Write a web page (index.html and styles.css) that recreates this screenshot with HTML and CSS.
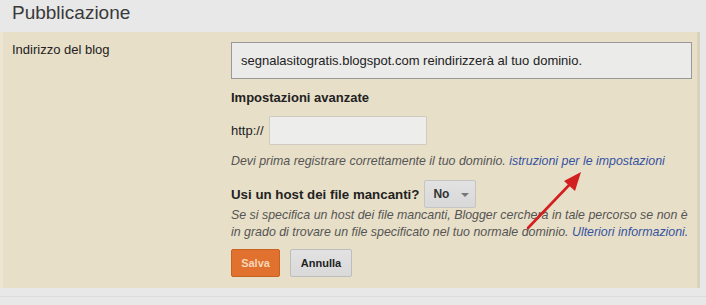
FILE: index.html
```html
<!DOCTYPE html>
<html lang="it">
<head>
    <meta charset="UTF-8">
    <meta name="viewport" content="width=device-width, initial-scale=1.0">
    <title>Pubblicazione</title>
    <link rel="stylesheet" href="styles.css">
</head>
<body>

    <h1 class="page-title">Pubblicazione</h1>

    <div class="panel">
        <div class="label">Indirizzo del blog</div>

        <div class="settings">
            <div class="address-box">segnalasitogratis.blogspot.com reindirizzerà al tuo dominio.</div>

            <h3 class="section-title">Impostazioni avanzate</h3>

            <div class="http-row">
                <span>http://</span>
                <input type="text" class="domain-input">
            </div>

            <p class="note">Devi prima registrare correttamente il tuo dominio. <a href="#">istruzioni per le impostazioni</a></p>

            <div class="host-row">
                <span class="host-label">Usi un host dei file mancanti?</span>
                <button class="select-btn">No <span class="caret"></span></button>
            </div>

            <p class="note multi">Se si specifica un host dei file mancanti, Blogger cercherà in tale percorso se non è in grado di trovare un file specificato nel tuo normale dominio. <a href="#" class="nowrap">Ulteriori informazioni.</a></p>

            <div class="actions">
                <button class="btn btn-save">Salva</button>
                <button class="btn btn-cancel">Annulla</button>
            </div>
        </div>

        <!-- red arrow drawn over the screenshot -->
        <svg class="arrow" width="70" height="70" viewBox="0 0 70 70">
            <line x1="8" y1="62" x2="52" y2="16" stroke="#d21f1f" stroke-width="2.6" stroke-linecap="round"/>
            <polygon points="61,6 44,15 55,25" fill="#d21f1f"/>
        </svg>
    </div>

    <div class="footer"></div>

</body>
</html>
```

FILE: styles.css
```css
/* General Styling */
body {
    margin: 0;
    font-family: Arial, "Liberation Sans", sans-serif;
    background-color: #e8e8e8;
    color: #333;
    width: 706px;
    height: 305px;
    overflow: hidden;
}

.page-title {
    margin: 0;
    height: 32px;
    padding-left: 12px;
    font-size: 19px;
    font-weight: normal;
    line-height: 25px;
    color: #3a3a3a;
}

.panel {
    position: relative;
    display: flex;
    width: 694px;
    padding: 10px 0 11px 0;
    background-color: #e8dfc8;
    border-left: 3px solid #ece5d2;
    border-right: 3px solid #dad2bc;
}

.label {
    width: 219px;
    padding-left: 9px;
    font-size: 13px;
    line-height: 16px;
    color: #222;
}

.settings {
    display: flex;
    flex-direction: column;
    align-items: flex-start;
}

.address-box {
    box-sizing: border-box;
    width: 461px;
    height: 37px;
    padding-left: 9px;
    line-height: 35px;
    font-size: 13px;
    color: #222;
    background-color: #ebebe9;
    border: 1px solid #999;
}

.section-title {
    margin: 11px 0 0 0;
    font-size: 13px;
    line-height: 16px;
    color: #222;
}

.http-row {
    display: flex;
    align-items: center;
    gap: 5px;
    margin-top: 10px;
    font-size: 13px;
    color: #222;
}

.domain-input {
    box-sizing: border-box;
    width: 158px;
    height: 29px;
    margin: 0;
    border: 1px solid #cfcbc0;
    background-color: #ededeb;
    border-radius: 1px;
}

.note {
    margin: 8px 0 0 0;
    font-size: 12.4px;
    font-style: italic;
    line-height: 16px;
    color: #555;
}

.note a {
    color: #3553a0;
    text-decoration: none;
}

.nowrap {
    white-space: nowrap;
}

.note.multi {
    margin-top: -1px;
    width: 464px;
    line-height: 16.5px;
}

.host-row {
    display: flex;
    align-items: center;
    gap: 5px;
    margin-top: 11px;
}

.host-label {
    font-size: 13.3px;
    font-weight: bold;
    color: #222;
}

.select-btn {
    box-sizing: border-box;
    width: 52px;
    height: 28px;
    padding: 0 0 0 8px;
    text-align: left;
    font-family: Arial, "Liberation Sans", sans-serif;
    font-size: 12px;
    font-weight: bold;
    color: #333;
    background: linear-gradient(#e2e2e2, #d8d8d8);
    border: 1px solid #c4c4c4;
    border-radius: 2px;
}

.caret {
    display: inline-block;
    margin-left: 8px;
    vertical-align: middle;
    border-left: 4px solid transparent;
    border-right: 4px solid transparent;
    border-top: 4px solid #777;
}

.actions {
    display: flex;
    gap: 10px;
    margin-top: 9px;
}

.btn {
    height: 28px;
    padding: 0 9px;
    font-family: Arial, "Liberation Sans", sans-serif;
    font-size: 11px;
    font-weight: bold;
    border-radius: 2px;
}

.btn-save {
    width: 49px;
    color: #f6d6b8;
    background-color: #e0712e;
    border: 1px solid #c9611f;
}

.btn-cancel {
    width: 62px;
    color: #222;
    background: linear-gradient(#e2e2e2, #d9d9d9);
    border: 1px solid #bdbdbd;
}

.arrow {
    position: absolute;
    left: 517px;
    top: 134px;
}

.footer {
    height: 8px;
    border-bottom: 1px solid #dcdcdc;
}
```
